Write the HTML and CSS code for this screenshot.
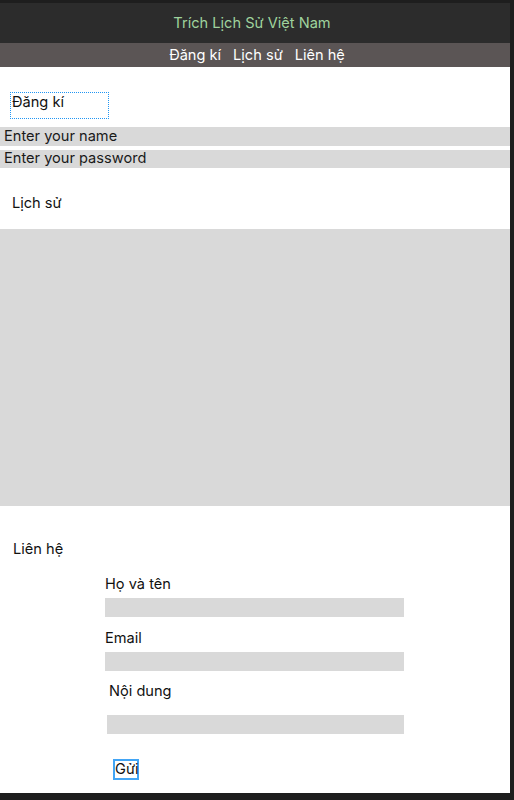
FILE: index.html
```html
<!DOCTYPE html>
<html lang="vi">
<head>
<meta charset="utf-8">
<title>Trích Lịch Sử Việt Nam</title>
<link rel="stylesheet" href="styles.css">
</head>
<body>
<div class="page">
  <header class="header">Trích Lịch Sử Việt Nam</header>
  <nav class="nav">
    <span>Đăng kí</span>
    <span>Lịch sử</span>
    <span>Liên hệ</span>
  </nav>
  <section class="register">
    <div class="reg-title">Đăng kí</div>
    <div class="field first">Enter your name</div>
    <div class="field second">Enter your password</div>
  </section>
  <section class="history">
    <h2 class="sec-title">Lịch sử</h2>
    <div class="history-box"></div>
  </section>
  <section class="contact">
    <h2 class="sec-title contact-title">Liên hệ</h2>
    <div class="form">
      <label class="label first">Họ và tên</label>
      <div class="input"></div>
      <label class="label">Email</label>
      <div class="input"></div>
      <label class="label shifted">Nội dung</label>
      <div class="input message"></div>
      <button class="send">Gửi</button>
    </div>
  </section>
</div>
</body>
</html>
```
FILE: styles.css
```css
html, body {
  margin: 0;
  padding: 0;
}
body {
  background: #1e1e1e;
  padding-top: 3px;
  font-family: Inter, "Noto Sans", sans-serif;
  font-size: 14.6px;
  color: #111;
}
.page {
  width: 510px;
  height: 790px;
  background: #fff;
  overflow: hidden;
}
.header {
  height: 40px;
  background: #2c2c2c;
  color: #9fd39d;
  display: flex;
  align-items: center;
  justify-content: center;
  padding-right: 6px;
  box-sizing: border-box;
}
.nav {
  height: 24px;
  background: #5b5555;
  color: #fff;
  display: flex;
  justify-content: center;
  align-items: center;
  gap: 12px;
  padding-left: 4px;
  box-sizing: border-box;
}
.register {
  padding-top: 25px;
}
.reg-title {
  margin-left: 10px;
  width: 99px;
  height: 27px;
  box-sizing: border-box;
  border: 1px dotted #2196f3;
  padding: 0 0 0 1px;
  line-height: 18px;
}
.field {
  background: #d9d9d9;
  padding-left: 4px;
  line-height: 19px;
  height: 19px;
  color: #1a1a1a;
}
.field.first {
  margin-top: 8px;
}
.field.second {
  margin-top: 4px;
  height: 18px;
  line-height: 17px;
}
.sec-title {
  font-size: 14.6px;
  font-weight: normal;
  margin: 0;
  padding-left: 12px;
  line-height: 20px;
}
.history .sec-title {
  margin-top: 25px;
}
.history-box {
  margin-top: 16px;
  height: 277px;
  background: #d9d9d9;
}
.contact-title {
  margin-top: 33px;
  padding-left: 13px;
}
.form {
  padding-left: 105px;
  display: flex;
  flex-direction: column;
  align-items: flex-start;
}
.label {
  margin-top: 11px;
  line-height: 20px;
}
.label.first {
  margin-top: 15px;
}
.input {
  width: 299px;
  height: 19px;
  background: #d9d9d9;
  margin-top: 4px;
}
.label.shifted {
  margin-left: 4px;
  margin-top: 10px;
}
.input.message {
  margin-left: 2px;
  width: 297px;
  margin-top: 14px;
}
.send {
  -webkit-appearance: none;
  appearance: none;
  margin-top: 25px;
  margin-left: 8px;
  font-family: Inter, "Noto Sans", sans-serif;
  font-size: 14.6px;
  background: #fff;
  border: 2px solid #42a5f5;
  border-radius: 0;
  padding: 0;
  width: 26px;
  height: 21px;
  line-height: 17px;
  text-align: center;
  color: #111;
  overflow: visible;
  white-space: nowrap;
}
```
